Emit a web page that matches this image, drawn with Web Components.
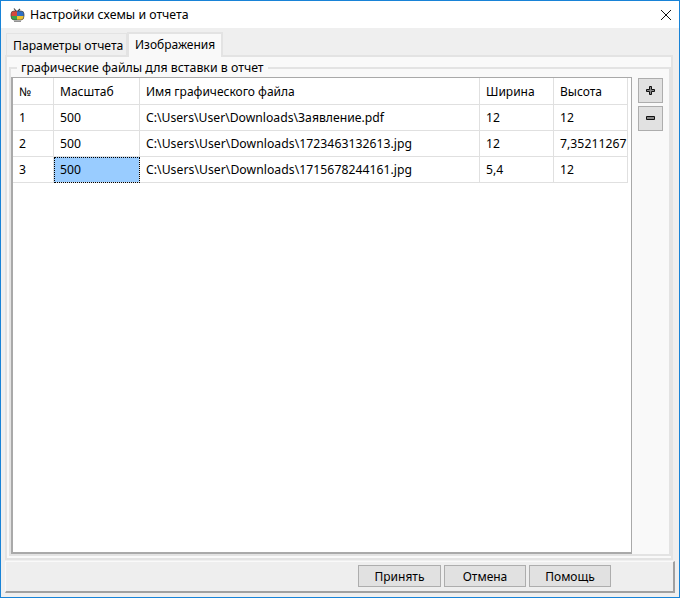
<!DOCTYPE html>
<html lang="ru">
<head>
<meta charset="utf-8">
<title>Настройки схемы и отчета</title>
<style>
html, body { margin: 0; padding: 0; width: 680px; height: 598px; overflow: hidden; background: #f0f0f0; }
body { font: 12px "Noto Sans", "Liberation Sans", sans-serif; color: #000; }
</style>
</head>
<body>
<dialog-window>
  <title-bar slot="title">Настройки схемы и отчета</title-bar>
  <tab-strip slot="tabs"></tab-strip>
  <group-box slot="pane" legend="графические файлы для вставки в отчет">
    <data-grid></data-grid>
    <div slot="side" style="display:flex;flex-direction:column;gap:3px;margin-top:1px">
      <tool-button kind="plus"></tool-button>
      <tool-button kind="minus"></tool-button>
    </div>
  </group-box>
  <button-bar slot="footer">
    <dialog-button style="width:83px">Принять</dialog-button>
    <dialog-button style="width:82px">Отмена</dialog-button>
    <dialog-button style="width:82px">Помощь</dialog-button>
  </button-bar>
</dialog-window>
<script>
class DialogWindow extends HTMLElement {
    constructor() {
        super();
        this.attachShadow({ mode: 'open' });
        this.shadowRoot.innerHTML = `
            <style>
                :host { display: flex; flex-direction: column; box-sizing: border-box; width: 680px; height: 598px;
                    border: 1px solid #1883d7; background: #efefef; }
                .body { flex: 1; display: flex; flex-direction: column; padding: 4px 6px 0 4px; min-height: 0; }
                .pane { box-sizing: border-box; flex: none; height: 505px; background: #f9f9f9;
                    border: 2px solid #e3e3e3; padding: 10px 0 2px 2px; display: flex; }
                .foot { flex: none; margin: 1px -2px 0 0; }
            </style>
            <slot name="title"></slot>
            <div class="body">
                <slot name="tabs"></slot>
                <div class="pane"><slot name="pane"></slot></div>
                <div class="foot"><slot name="footer"></slot></div>
            </div>`;
    }
}

class TitleBar extends HTMLElement {
    constructor() {
        super();
        this.attachShadow({ mode: 'open' });
        this.shadowRoot.innerHTML = `
            <style>
                :host { display: flex; align-items: center; flex: none; height: 27px; background: #fff; padding-left: 9px; font-size: 12.3px; }
                svg.logo { width: 15px; height: 14px; margin-right: 5px; }
                .txt { flex: 1; }
                .close { width: 12px; height: 12px; margin-right: 7px; }
            </style>
            <svg class="logo" viewBox="0 0 15 14">
                <path d="M6 3 L4 0.5 M8 3 L10 1" stroke="#444" stroke-width="1.2" fill="none"/>
                <path d="M1 6 Q1 3 4 3 L7 3 L7 8 L1 8Z" fill="#d8483c"/>
                <path d="M7 3 L11 3 Q14 3 14 6 L14 8 L7 8Z" fill="#2f6fc4"/>
                <path d="M1 8 L7 8 L7 12 L4 12 Q1 12 1 8Z" fill="#3ba24a"/>
                <path d="M7 8 L14 8 Q14 12 11 12 L7 12Z" fill="#eec22f"/>
                <path d="M1 6 Q1 3 4 3 L11 3 Q14 3 14 6 L14 8 Q14 12 11 12 L4 12 Q1 12 1 8Z" fill="none" stroke="#444" stroke-width=".7"/>
                <path d="M4 13.3 H11" stroke="#777" stroke-width="1"/>
            </svg>
            <span class="txt"><slot></slot></span>
            <svg class="close" viewBox="0 0 12 12"><path d="M1 1 L11 11 M11 1 L1 11" stroke="#111" stroke-width="1" fill="none"/></svg>`;
    }
}

class TabStrip extends HTMLElement {
    constructor() {
        super();
        this.attachShadow({ mode: 'open' });
        this.shadowRoot.innerHTML = `
            <style>
                :host { display: flex; align-items: flex-end; flex: none; height: 25px; margin-bottom: -2px; position: relative; z-index: 1; padding-left: 1px; }
                .tab { box-sizing: border-box; white-space: nowrap; }
                .off { height: 22px; width: 121px; margin-bottom: 2px; padding: 3px 0 0 6px; background: #efefef; border: 1px solid #e3e3e3; border-bottom: 0; font-size: 12.2px; }
                .on { height: 25px; width: 96px; padding: 2px 0 0 6px; background: #f9f9f9; border: 2px solid #e3e3e3; border-bottom: 0; }
            </style>
            <div class="tab off">Параметры отчета</div>
            <div class="tab on">Изображения</div>`;
    }
}

class GroupBox extends HTMLElement {
    constructor() {
        super();
        this.attachShadow({ mode: 'open' });
        this.shadowRoot.innerHTML = `
            <style>
                :host { display: flex; flex: 1; min-width: 0; box-sizing: border-box; position: relative; border: 2px solid #e3e3e3; padding: 8px 6px 0 0; gap: 6px; }
                .legend { position: absolute; left: 6px; top: -10px; padding: 0 4px; background: #f9f9f9; white-space: nowrap; font-size: 12.35px; }
                .main { flex: 1; min-width: 0; display: flex; }
            </style>
            <div class="legend">${this.getAttribute('legend')}</div>
            <div class="main"><slot></slot></div>
            <slot name="side"></slot>`;
    }
}

const COLS = '41px 86px 340px 74px 74px';
const HEAD = ['№', 'Масштаб', 'Имя графического файла', 'Ширина', 'Высота'];
const ROWS = [
    ['1', '500', 'C:\\Users\\User\\Downloads\\Заявление.pdf', '12', '12'],
    ['2', '500', 'C:\\Users\\User\\Downloads\\1723463132613.jpg', '12', '7,35211267'],
    ['3', '500', 'C:\\Users\\User\\Downloads\\1715678244161.jpg', '5,4', '12'],
];

class DataGrid extends HTMLElement {
    constructor() {
        super();
        this.attachShadow({ mode: 'open' });
        const cell = (t, cls) => `<div class="c ${cls}">${t}</div>`;
        const rows = ROWS.map((r, ri) => r.map((t, i) => {
            let cls = ri === 2 && i === 1 ? 'v sel' : 'v';
            // digits come out a bit narrow in this font
            if (ri > 0 && i === 2 || t.length > 8 && i === 4) cls += ' wide';
            return cell(t, cls);
        }).join('')).join('');
        this.shadowRoot.innerHTML = `
            <style>
                :host { display: block; flex: 1; box-sizing: border-box; background: #fff; border: solid #a9a9a9; border-width: 1px 1px 2px 2px; overflow: hidden; }
                .g { display: grid; grid-template-columns: ${COLS}; grid-template-rows: 27px repeat(3, 26px); }
                .c { box-sizing: border-box; padding-left: 6px; border-right: 1px solid #e0e0e0; border-bottom: 1px solid #e0e0e0; white-space: nowrap; overflow: hidden; }
                .h { line-height: 27px; }
                .v { font-size: 12.2px; line-height: 25px; }
                .wide { letter-spacing: .05px; }
                .sel { background: #99ccff; outline: 1px dotted #000; outline-offset: -1px; }
            </style>
            <div class="g">${HEAD.map(t => cell(t, 'h')).join('')}${rows}</div>`;
    }
}

class ToolButton extends HTMLElement {
    constructor() {
        super();
        this.attachShadow({ mode: 'open' });
        const plus = this.getAttribute('kind') === 'plus';
        const d = plus ? 'M3.5 .5 H5.5 V3.5 H8.5 V5.5 H5.5 V8.5 H3.5 V5.5 H.5 V3.5 H3.5 Z' : 'M.5 2.5 H8.5 V5.5 H.5 Z';
        this.shadowRoot.innerHTML = `
            <style>
                :host { display: flex; align-items: center; justify-content: center; box-sizing: border-box; width: 25px; height: 25px; background: #e1e1e1; border: 1px solid #adadad; }
                svg { width: 9px; height: 9px; }
            </style>
            <svg viewBox="0 0 9 9"><path d="${d}" fill="#888" stroke="#111" stroke-width="1"/></svg>`;
    }
}

class ButtonBar extends HTMLElement {
    constructor() {
        super();
        this.attachShadow({ mode: 'open' });
        this.shadowRoot.innerHTML = `
            <style>
                :host { display: flex; justify-content: flex-end; gap: 3px; box-sizing: border-box; height: 32px; padding: 3px 62px 0 0; border: solid #a0a0a0; border-width: 1px 2px 2px 1px; border-top-color: #f9f9f9; border-left-color: #f9f9f9; background: #eeeeee; }
            </style>
            <slot></slot>`;
    }
}

class DialogButton extends HTMLElement {
    constructor() {
        super();
        this.attachShadow({ mode: 'open' });
        this.shadowRoot.innerHTML = `
            <style>
                :host { display: flex; align-items: center; justify-content: center; box-sizing: border-box; height: 22px; background: #e1e1e1; border: 1px solid #adadad; }
            </style>
            <slot></slot>`;
    }
}

customElements.define('dialog-window', DialogWindow);
customElements.define('title-bar', TitleBar);
customElements.define('tab-strip', TabStrip);
customElements.define('group-box', GroupBox);
customElements.define('data-grid', DataGrid);
customElements.define('tool-button', ToolButton);
customElements.define('button-bar', ButtonBar);
customElements.define('dialog-button', DialogButton);
</script>
</body>
</html>
